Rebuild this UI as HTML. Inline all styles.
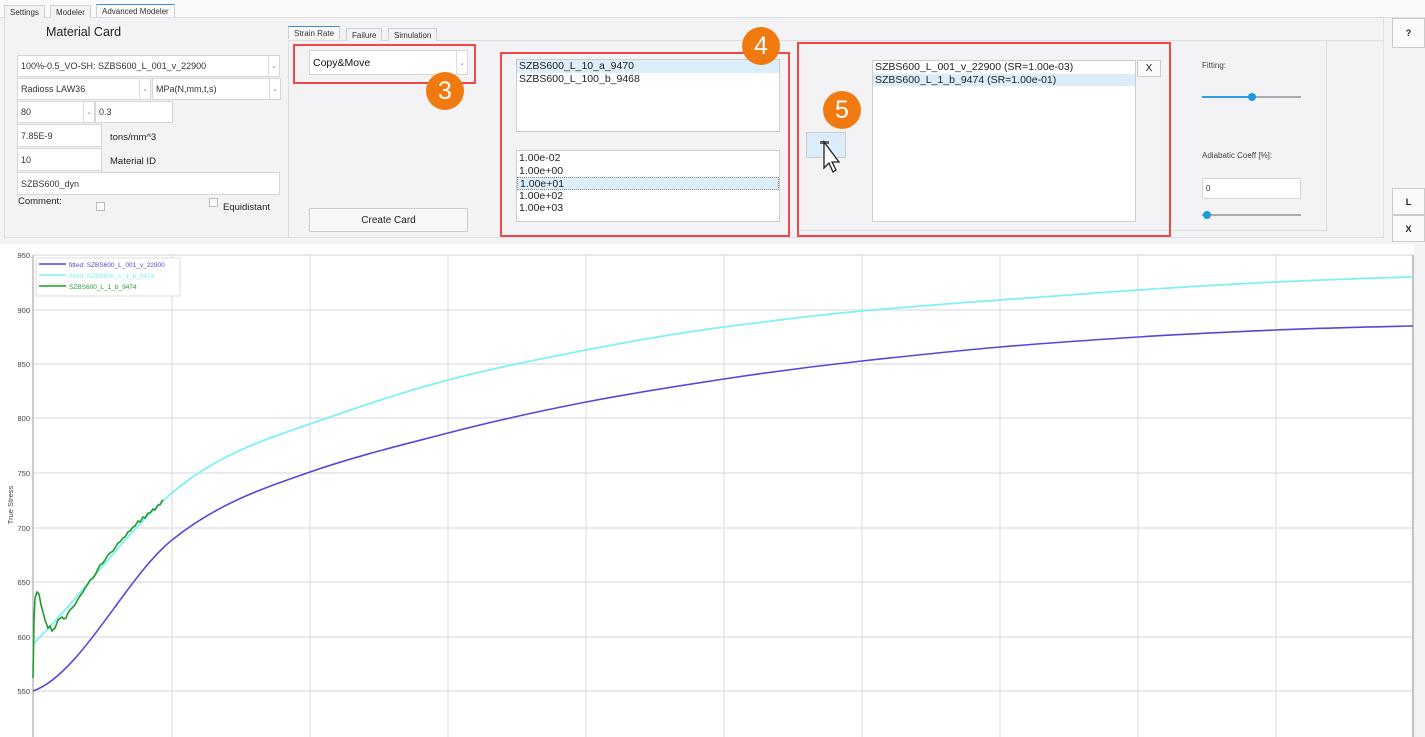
<!DOCTYPE html>
<html><head><meta charset="utf-8"><style>
*{box-sizing:border-box;margin:0;padding:0}
body{width:1425px;height:737px;background:#f3f3f6;font-family:"Liberation Sans",sans-serif;position:relative;overflow:hidden;color:#222}
.a{position:absolute}
.inp{position:absolute;background:#fff;border:1px solid #d6d6d6;font-size:9px;padding:0 3px;display:flex;align-items:center;color:#333}
.dd{position:absolute;right:0;top:0;bottom:0;width:11px;border-left:1px solid #ddd;font-size:7px;color:#888;display:flex;align-items:center;justify-content:center}
.tab{position:absolute;font-size:8px;color:#333;border:1px solid #d0d0d0;border-bottom:none;background:#f3f3f6;padding:2px 5px 1px}
.red{position:absolute;border:2px solid #f04848}
.badge{position:absolute;width:38px;height:38px;border-radius:50%;background:#f07a10;color:#fff;font-size:25px;display:flex;align-items:center;justify-content:center}
.list{position:absolute;background:#fff;border:1px solid #ccc;font-size:10.5px;color:#222}
.list div{height:12.5px;line-height:12.5px;padding-left:2px}
.sel{background:#dceefa}
.btn{position:absolute;background:#f7f7f7;border:1px solid #ccc;font-size:10px;display:flex;align-items:center;justify-content:center}
</style></head><body>
<div class="a" style="left:0;top:0;width:1425px;height:18px;background:#fafafb;border-bottom:1px solid #ddd"></div>
<div class="tab" style="left:4px;top:5px">Settings</div>
<div class="tab" style="left:50px;top:5px">Modeler</div>
<div class="tab" style="left:96px;top:4px;background:#fafafb;border-top:1px solid #3b8fd6">Advanced Modeler</div>
<div class="a" style="left:4px;top:18px;width:1380px;height:220px;border:1px solid #e0e0e0;border-top:none"></div>
<div class="a" style="left:46px;top:25px;font-size:12.5px">Material Card</div>
<div class="inp" style="left:17px;top:55px;width:263px;height:22px">100%-0.5_VO-SH: SZBS600_L_001_v_22900<span class="dd">⌄</span></div>
<div class="inp" style="left:17px;top:78px;width:134px;height:22px">Radioss LAW36<span class="dd">⌄</span></div>
<div class="inp" style="left:152px;top:78px;width:129px;height:22px">MPa(N,mm,t,s)<span class="dd">⌄</span></div>
<div class="inp" style="left:17px;top:101px;width:78px;height:22px">80<span class="dd">⌄</span></div>
<div class="inp" style="left:95px;top:101px;width:78px;height:22px">0.3</div>
<div class="inp" style="left:17px;top:124px;width:85px;height:23px">7.85E-9</div>
<div class="a" style="left:110px;top:132px;font-size:9.5px">tons/mm^3</div>
<div class="inp" style="left:17px;top:148px;width:85px;height:23px">10</div>
<div class="a" style="left:110px;top:156px;font-size:9.5px">Material ID</div>
<div class="inp" style="left:17px;top:172px;width:263px;height:23px">SZBS600_dyn</div>
<div class="a" style="left:18px;top:196px;font-size:9.5px">Comment:</div>
<div class="a" style="left:96px;top:202px;width:9px;height:9px;border:1px solid #bbb;background:#fff"></div>
<div class="a" style="left:209px;top:198px;width:9px;height:9px;border:1px solid #bbb;background:#fff"></div>
<div class="a" style="left:223px;top:202px;font-size:9.5px">Equidistant</div>

<div class="a" style="left:288px;top:40px;width:1096px;height:198px;border-left:1px solid #ddd;border-top:1px solid #ddd"></div>
<div class="tab" style="left:288px;top:26px;border-top:1px solid #3b8fd6;background:#fafafb">Strain Rate</div>
<div class="tab" style="left:346px;top:28px">Failure</div>
<div class="tab" style="left:388px;top:28px">Simulation</div>
<div class="inp" style="left:309px;top:50px;width:159px;height:25px;font-size:10.5px;color:#111">Copy&amp;Move<span class="dd">⌄</span></div>
<div class="red" style="left:293px;top:44px;width:183px;height:40px"></div>
<div class="badge" style="left:426px;top:72px">3</div>
<div class="btn" style="left:309px;top:208px;width:159px;height:24px">Create Card</div>

<div class="list" style="left:516px;top:59px;width:264px;height:73px"><div class="sel">SZBS600_L_10_a_9470</div><div>SZBS600_L_100_b_9468</div></div>
<div class="list" style="left:516px;top:150px;width:264px;height:72px;padding-top:1px"><div>1.00e-02</div><div>1.00e+00</div><div class="sel" style="border:1px dotted #888">1.00e+01</div><div>1.00e+02</div><div>1.00e+03</div></div>
<div class="red" style="left:500px;top:52px;width:290px;height:185px"></div>
<div class="badge" style="left:742px;top:27px">4</div>

<div class="a" style="left:797px;top:40px;width:530px;height:191px;border:1px solid #ddd"></div>
<div class="btn" style="left:806px;top:132px;width:40px;height:26px;background:#dcecf8"></div>
<svg class="a" style="left:816px;top:138px" width="30" height="38"><rect x="4" y="3" width="9" height="3" fill="#666"/><path d="M8 4 L8 30 L13 25 L17 34 L20 32 L16 24 L23 24 Z" fill="#fff" stroke="#222" stroke-width="1.3"/></svg>
<div class="badge" style="left:823px;top:91px">5</div>
<div class="list" style="left:872px;top:60px;width:264px;height:162px"><div>SZBS600_L_001_v_22900 (SR=1.00e-03)</div><div class="sel">SZBS600_L_1_b_9474 (SR=1.00e-01)</div></div>
<div class="btn" style="left:1137px;top:60px;width:24px;height:17px;background:#fafafa">X</div>
<div class="red" style="left:797px;top:42px;width:374px;height:195px"></div>
<div class="a" style="left:1202px;top:61px;font-size:8px;color:#444">Fitting:</div>
<div class="a" style="left:1202px;top:96px;width:99px;height:2px;background:#aaa"></div>
<div class="a" style="left:1202px;top:96px;width:50px;height:2px;background:#2aa0e0"></div>
<div class="a" style="left:1248px;top:93px;width:8px;height:8px;border-radius:50%;background:#1a9be0"></div>
<div class="a" style="left:1202px;top:151px;font-size:8px;color:#444">Adiabatic Coeff [%]:</div>
<div class="inp" style="left:1202px;top:178px;width:99px;height:21px;font-size:8px">0</div>
<div class="a" style="left:1202px;top:214px;width:99px;height:2px;background:#aaa"></div>
<div class="a" style="left:1203px;top:211px;width:8px;height:8px;border-radius:50%;background:#1a9be0"></div>
<div class="btn" style="left:1392px;top:18px;width:33px;height:30px;font-size:9px;font-weight:bold;background:#fafafa">?</div>
<div class="btn" style="left:1392px;top:188px;width:33px;height:27px;font-size:9px;font-weight:bold;background:#fafafa">L</div>
<div class="btn" style="left:1392px;top:215px;width:33px;height:27px;font-size:9px;font-weight:bold;background:#fafafa">X</div>

<svg class="a" style="left:0;top:244px" width="1425" height="493">
<g transform="translate(0,-244)">
<rect x="0" y="244" width="1420" height="493" fill="#fff"/>
<rect x="1414" y="244" width="11" height="493" fill="#f3f3f6"/>
<g stroke="#e4e4e8" stroke-width="1.5">
<line x1="34" y1="255" x2="1413" y2="255"/><line x1="34" y1="310" x2="1413" y2="310"/><line x1="34" y1="364" x2="1413" y2="364"/><line x1="34" y1="418" x2="1413" y2="418"/><line x1="34" y1="473" x2="1413" y2="473"/><line x1="34" y1="528" x2="1413" y2="528"/><line x1="34" y1="582" x2="1413" y2="582"/><line x1="34" y1="637" x2="1413" y2="637"/><line x1="34" y1="691" x2="1413" y2="691"/>
</g>
<g stroke="#d8d8dc" stroke-width="1">
<line x1="172" y1="255" x2="172" y2="737"/><line x1="310" y1="255" x2="310" y2="737"/><line x1="448" y1="255" x2="448" y2="737"/><line x1="586" y1="255" x2="586" y2="737"/><line x1="724" y1="255" x2="724" y2="737"/><line x1="862" y1="255" x2="862" y2="737"/><line x1="1000" y1="255" x2="1000" y2="737"/><line x1="1138" y1="255" x2="1138" y2="737"/><line x1="1276" y1="255" x2="1276" y2="737"/>
</g>
<line x1="33" y1="255" x2="33" y2="737" stroke="#999"/>
<line x1="1413" y1="255" x2="1413" y2="737" stroke="#888"/>
<g font-size="7.5" fill="#444" text-anchor="end" font-family="Liberation Sans">
<text x="30" y="258">950</text><text x="30" y="313">900</text><text x="30" y="367">850</text><text x="30" y="421">800</text><text x="30" y="476">750</text><text x="30" y="531">700</text><text x="30" y="585">650</text><text x="30" y="640">600</text><text x="30" y="694">550</text>
</g>
<text x="13" y="505" font-size="7.5" fill="#444" transform="rotate(-90 13 505)" text-anchor="middle">True Stress</text>
<path d="M33 691 C80 675 126 577 172 540 C218 503 264 488 310 472 C356 456 402 445 448 433 C494 421 540 411 586 402 C632 393 678 386 724 379 C770 372 816 366 862 361 C908 356 954 351 1000 347 C1046 343 1092 340 1138 337 C1184 334 1230 332 1276 330 C1322 328 1367 327 1413 326" fill="none" stroke="#5548d8" stroke-width="1.6"/>
<path d="M33 644 C80 598 126 532 172 493 C218 454 264 440 310 424 C356 408 402 392 448 380 C494 368 540 359 586 350 C632 341 678 333 724 327 C770 321 816 315 862 311 C908 307 954 303 1000 300 C1046 297 1092 293 1138 290 C1184 287 1230 284 1276 282 C1322 280 1367 278 1413 277" fill="none" stroke="#7ff0f4" stroke-width="1.8"/>
<polyline points="33,678 34,620 35,598 37,592 39,594 41,605 43,612 45,620 48,628 50,626 52,631 55,628 58,620 62,617 64,619 66,618 68,613 70,610 73,607 75,605 78,599 80,596 83,592 85,588 88,584 90,580 93,578 95,575 98,569 100,565 103,563 105,560 108,555 110,553 113,551 115,548 118,543 120,542 123,538 125,537 128,532 130,531 133,527 135,526 138,521 140,522 143,517 145,518 148,513 150,513 153,509 155,510 158,505 160,505 162,501 163,500" fill="none" stroke="#1e9a2a" stroke-width="1.6"/>
<rect x="36" y="258" width="144" height="38" fill="#fff" stroke="#ddd"/>
<line x1="39" y1="264" x2="66" y2="264" stroke="#5548d8" stroke-width="1.5"/>
<line x1="39" y1="275" x2="66" y2="275" stroke="#7ff0f4" stroke-width="1.5"/>
<line x1="39" y1="286" x2="66" y2="286" stroke="#1e9a2a" stroke-width="1.5"/>
<g font-size="6.5" font-family="Liberation Sans"><text x="69" y="267" fill="#5548d8">fitted: SZBS600_L_001_v_22900</text><text x="69" y="278" fill="#7ff0f4">fitted: SZBS600_L_1_b_9474</text><text x="69" y="289" fill="#2a9a3a">SZBS600_L_1_b_9474</text></g>
</g></svg>
</body></html>
